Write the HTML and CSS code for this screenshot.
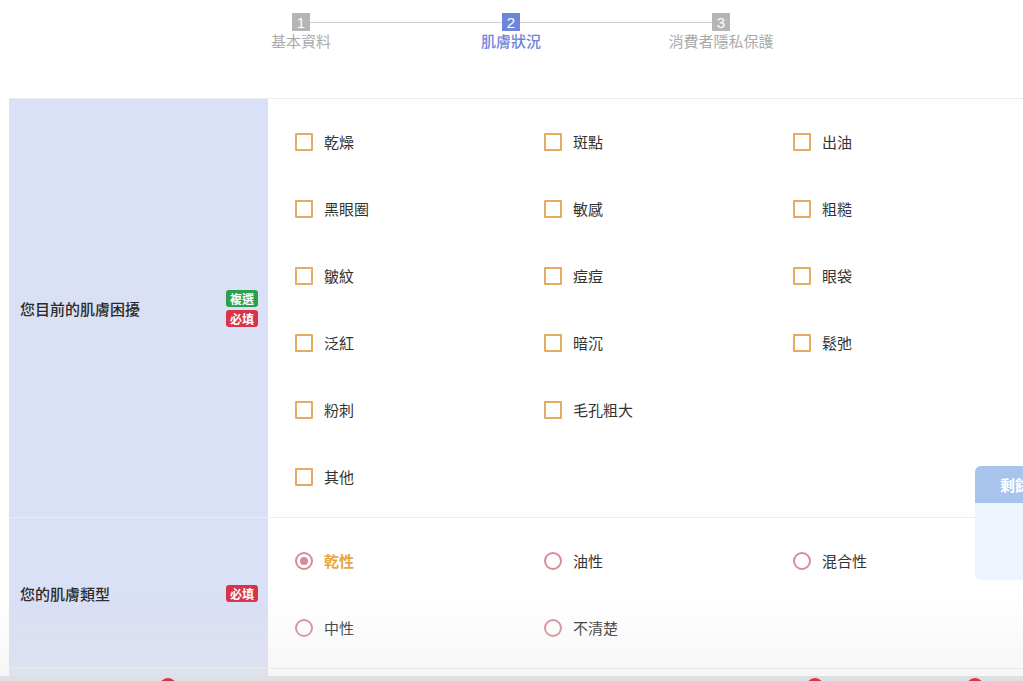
FILE: index.html
```html
<!DOCTYPE html>
<html lang="zh-Hant">
<head>
  <meta charset="UTF-8">
  <meta name="viewport" content="width=device-width, initial-scale=1.0">
  <title>肌膚狀況</title>
  <link rel="stylesheet" href="styles.css">
</head>
<body>
  <div class="stepper">
    <div class="step">
      <span class="step-num">1</span>
      <span class="step-label">基本資料</span>
    </div>
    <div class="step active">
      <span class="step-num">2</span>
      <span class="step-label">肌膚狀況</span>
    </div>
    <div class="step last">
      <span class="step-num">3</span>
      <span class="step-label">消費者隱私保護</span>
    </div>
  </div>

  <div class="form-table">
    <div class="form-row">
      <div class="row-label">
        <span>您目前的肌膚困擾</span>
        <div class="badges">
          <span class="badge multi">複選</span>
          <span class="badge required">必填</span>
        </div>
      </div>
      <div class="row-options">
        <label class="option"><span class="check"></span>乾燥</label>
        <label class="option"><span class="check"></span>斑點</label>
        <label class="option"><span class="check"></span>出油</label>
        <label class="option"><span class="check"></span>黑眼圈</label>
        <label class="option"><span class="check"></span>敏感</label>
        <label class="option"><span class="check"></span>粗糙</label>
        <label class="option"><span class="check"></span>皺紋</label>
        <label class="option"><span class="check"></span>痘痘</label>
        <label class="option"><span class="check"></span>眼袋</label>
        <label class="option"><span class="check"></span>泛紅</label>
        <label class="option"><span class="check"></span>暗沉</label>
        <label class="option"><span class="check"></span>鬆弛</label>
        <label class="option"><span class="check"></span>粉刺</label>
        <label class="option"><span class="check"></span>毛孔粗大</label>
        <label class="option empty"></label>
        <label class="option"><span class="check"></span>其他</label>
      </div>
    </div>

    <div class="form-row">
      <div class="row-label">
        <span>您的肌膚類型</span>
        <div class="badges">
          <span class="badge required">必填</span>
        </div>
      </div>
      <div class="row-options">
        <label class="option selected"><span class="radio"></span>乾性</label>
        <label class="option"><span class="radio"></span>油性</label>
        <label class="option"><span class="radio"></span>混合性</label>
        <label class="option"><span class="radio"></span>中性</label>
        <label class="option"><span class="radio"></span>不清楚</label>
      </div>
    </div>

    <div class="form-row">
      <div class="row-label"></div>
      <div class="row-options"></div>
    </div>
  </div>

  <div class="remain-panel">
    <div class="remain-head">剩餘</div>
    <div class="remain-body"></div>
  </div>

  <div class="bottom-fade"></div>
  <div class="bottom-bar">
    <span class="dot dot-1"></span>
    <span class="dot dot-2"></span>
    <span class="dot dot-3"></span>
  </div>
</body>
</html>
```

FILE: styles.css
```css
body {
  margin: 0;
  background: #fff;
  font-family: "Noto Sans CJK TC", "Liberation Sans", sans-serif;
  color: #333;
  overflow: hidden;
  height: 681px;
}

/* stepper */
.stepper {
  display: flex;
  padding: 13px 0 0 196px;
  height: 98px;
  box-sizing: border-box;
}

.step {
  position: relative;
  width: 210px;
  display: flex;
  flex-direction: column;
  align-items: center;
}

.step::after {
  content: "";
  position: absolute;
  top: 9px;
  left: calc(50% + 9px);
  width: 192px;
  height: 1px;
  background: #cfcfcf;
}

.step.last::after {
  display: none;
}

.step-num {
  width: 18px;
  height: 18px;
  background: #b5b5b5;
  color: #fff;
  font-size: 15px;
  line-height: 19px;
  text-align: center;
  font-family: "Liberation Sans", sans-serif;
}

.step-label {
  margin-top: 0;
  font-size: 15px;
  line-height: 20px;
  color: #aaa;
}

.step.active .step-num {
  background: #6f86d8;
}

.step.active .step-label {
  color: #6f86d8;
  font-weight: 500;
}

/* form */
.form-table {
  margin-left: 9px;
  border-top: 1px solid #ececec;
}

.form-row {
  display: flex;
  border-bottom: 1px solid #ececec;
}

.row-label {
  width: 259px;
  flex-shrink: 0;
  background: #dae0f5;
  display: flex;
  align-items: center;
  justify-content: space-between;
  padding: 0 10px 0 11px;
  box-sizing: border-box;
  font-size: 15px;
  font-weight: 500;
  color: #2b2b2b;
}

.badges {
  display: flex;
  flex-direction: column;
  gap: 3px;
}

.badge {
  width: 32px;
  height: 17px;
  border-radius: 3px;
  color: #fff;
  font-size: 12px;
  font-weight: 700;
  line-height: 17px;
  text-align: center;
}

.badge.multi {
  background: #2aa04a;
}

.badge.required {
  background: #d7334b;
}

.row-options {
  flex: 1;
  display: grid;
  grid-template-columns: repeat(3, 249px);
  grid-auto-rows: 67px;
  padding: 9px 0 7px 27px;
  min-height: 12px;
}

.option {
  display: flex;
  align-items: center;
  gap: 11px;
  font-size: 15px;
  color: #333;
}

.check {
  width: 18px;
  height: 18px;
  border: 2px solid #e4ac62;
  border-radius: 1px;
  box-sizing: border-box;
}

.radio {
  position: relative;
  width: 18px;
  height: 18px;
  border: 2px solid #d78c99;
  border-radius: 50%;
  box-sizing: border-box;
}

.option.selected {
  color: #e8a540;
  font-weight: 700;
}

.option.selected .radio::after {
  content: "";
  position: absolute;
  top: 3px;
  left: 3px;
  width: 8px;
  height: 8px;
  border-radius: 50%;
  background: #d78c99;
}

/* floating counter */
.remain-panel {
  position: fixed;
  left: 975px;
  top: 466px;
  width: 110px;
  height: 114px;
  border-radius: 6px;
  background: #eef4fd;
  overflow: hidden;
}

.remain-head {
  height: 37px;
  background: #a8c4ec;
  color: #fff;
  font-size: 15px;
  font-weight: 700;
  line-height: 37px;
  padding-left: 25px;
}

/* bottom fixed bar */
.bottom-fade {
  position: fixed;
  left: 0;
  right: 0;
  bottom: 5px;
  height: 80px;
  background: linear-gradient(rgba(255, 255, 255, 0), rgba(228, 230, 230, 0.35));
  pointer-events: none;
}

.bottom-bar {
  position: fixed;
  left: 0;
  right: 0;
  bottom: 0;
  height: 5px;
  background: #dde1e1;
  overflow: hidden;
}

.dot {
  position: absolute;
  top: 2px;
  width: 18px;
  height: 18px;
  border-radius: 50%;
  background: #d7334b;
}

.dot-1 {
  left: 159px;
}

.dot-2 {
  left: 806px;
}

.dot-3 {
  left: 966px;
}
```
